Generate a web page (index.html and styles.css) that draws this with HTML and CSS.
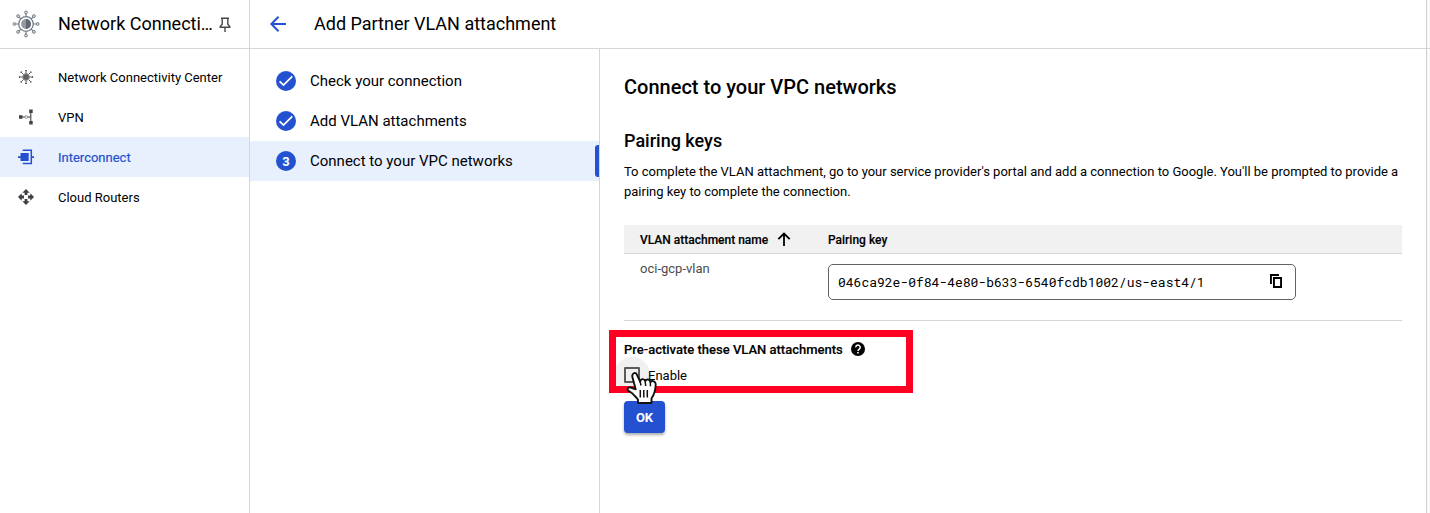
FILE: index.html
```html
<!DOCTYPE html>
<html lang="en">
<head>
<meta charset="utf-8">
<title>Add Partner VLAN attachment</title>
<link rel="stylesheet" href="styles.css">
</head>
<body>
<div class="app">
  <nav class="sidebar">
    <div class="product">
      <svg class="product-icon" width="28" height="28" viewBox="0 0 28 28" fill="none" stroke="#747b86">
        <circle cx="14" cy="14" r="7.3" stroke-width="1.3"/>
        <circle cx="14" cy="14" r="4.9" fill="#9299a4" stroke="none"/>
        <path d="M14 9.1a4.9 4.9 0 0 1 0 9.8z" fill="#606872" stroke="none"/>
        <path d="M14 6.7V4M14 21.3V24M6.7 14H4M21.3 14H24M8.8 8.8 7 7M19.2 8.8 21 7M8.8 19.2 7 21M19.2 19.2 21 21" stroke-width="1.2"/>
        <g stroke-width="1" fill="#e1e4e8"><circle cx="14" cy="2.4" r="1.4"/><circle cx="14" cy="25.6" r="1.4"/><circle cx="2.4" cy="14" r="1.4"/><circle cx="25.6" cy="14" r="1.4"/><circle cx="6.1" cy="6.1" r="1.4"/><circle cx="21.9" cy="6.1" r="1.4"/><circle cx="6.1" cy="21.9" r="1.4"/><circle cx="21.9" cy="21.9" r="1.4"/></g>
      </svg>
      <span class="product-name">Network Connecti…</span>
      <svg class="pin" width="12" height="16" viewBox="0 0 12 16" fill="none" stroke="#45474b" stroke-width="1.4"><path d="M2 1.2h8M3.2 1.2V7.3L1.2 9.5v.8h9.6v-.8L8.8 7.3V1.2M6 10.3V15"/></svg>
    </div>
    <div class="nav-list">
      <a class="nav-item"><svg width="16" height="16" viewBox="0 0 16 16" fill="none" stroke="#626262"><circle cx="8" cy="8" r="3.4" fill="#606060" stroke="#999"/><path d="M8 4.4V1M8 11.6V15M4.4 8H1M11.6 8H15M5.4 5.4 3.1 3.1M10.6 5.4l2.3-2.3M5.4 10.6l-2.3 2.3M10.6 10.6l2.3 2.3"/><path d="M7 1.5h2M7 14.5h2M1.5 7v2M14.5 7v2M2.5 3.7l1.2-1.2M12.3 2.5l1.2 1.2M2.5 12.3l1.2 1.2M12.3 13.5l1.2-1.2" stroke-width="1.2"/></svg><span>Network Connectivity Center</span></a>
      <a class="nav-item"><svg width="16" height="16" viewBox="0 0 16 16" fill="#424242"><path d="M1 6.2h3.6v3.6H1zM11.2.5h3.5V4h-3.5zM11.2 12h3.5v3.5h-3.5z"/><path d="M4.5 8h2.4M9.6 8h3.2M12.8 3.5v9" fill="none" stroke="#424242" stroke-width="1.1"/><circle cx="8.2" cy="8" r="1.4" fill="#fff" stroke="#777" stroke-width=".8"/></svg><span>VPN</span></a>
      <a class="nav-item active"><svg width="16" height="16" viewBox="0 0 16 16" fill="#2451cf"><path d="M2.5 4h8.2v8H2.5zM0 7.2h3v1.7H0zM13 7.2h3v1.7h-3z"/><path d="M4.7 1.2h8.6v13.4H4.7" fill="none" stroke="#2451cf" stroke-width="1.5"/></svg><span>Interconnect</span></a>
      <a class="nav-item"><svg width="16" height="16" viewBox="0 0 16 16" fill="#3e4044"><path d="M8 0l3.7 3.7H9.4V6H6.6V3.7H4.3zM8 16l3.7-3.7H9.4V10H6.6v2.3H4.3zM0 8l3.7-3.7v2.3H6v2.8H3.7v2.3zM16 8l-3.7-3.7v2.3H10v2.8h2.3v2.3z"/></svg><span>Cloud Routers</span></a>
    </div>
  </nav>
  <div class="workspace">
    <header class="topbar">
      <svg width="16" height="16" viewBox="0 0 16 16" fill="none" stroke="#2451cf" stroke-width="2"><path d="M16 8H1.5M8.5.8 1.4 8l7.1 7.2"/></svg>
      <h1>Add Partner VLAN attachment</h1>
    </header>
    <div class="columns">
      <aside class="steps">
        <div class="step"><span class="bullet"><svg width="20" height="20" viewBox="0 0 20 20" fill="none" stroke="#fff" stroke-width="1.8"><path d="m3.6 10.3 3.9 3.8 8.8-8.7"/></svg></span><span class="step-label">Check your connection</span></div>
        <div class="step"><span class="bullet"><svg width="20" height="20" viewBox="0 0 20 20" fill="none" stroke="#fff" stroke-width="1.8"><path d="m3.6 10.3 3.9 3.8 8.8-8.7"/></svg></span><span class="step-label">Add VLAN attachments</span></div>
        <div class="step current"><span class="bullet number">3</span><span class="step-label">Connect to your VPC networks</span><span class="marker"></span></div>
      </aside>
      <main class="content">
        <h2>Connect to your VPC networks</h2>
        <h3>Pairing keys</h3>
        <p class="intro">To complete the VLAN attachment, go to your service provider's portal and add a connection to Google. You'll be prompted to provide a<br>pairing key to complete the connection.</p>
        <div class="table">
          <div class="row head">
            <div class="name-cell"><span class="head-label">VLAN attachment name</span><svg width="14" height="14" viewBox="0 0 14 14" fill="none" stroke="#000" stroke-width="1.8"><path d="M7 14V1.7M1.3 7.2 7 1.5l5.7 5.7"/></svg></div>
            <div class="head-label">Pairing key</div>
          </div>
          <div class="row body">
            <div class="name-cell vlan">oci-gcp-vlan</div>
            <div class="key-field"><span>046ca92e-0f84-4e80-b633-6540fcdb1002/us-east4/1</span><svg width="12" height="14" viewBox="0 0 12 14" fill="none" stroke="#000" stroke-width="1.9"><path d="M.95 10V.95H9"/><path d="M3.95 3.95h7.1v9.1h-7.1z"/></svg></div>
          </div>
        </div>
        <section class="activate">
          <div class="activate-title"><span>Pre-activate these VLAN attachments</span><svg width="14" height="14" viewBox="0 0 14 14"><circle cx="7" cy="7" r="7"/><path d="M4.8 5.4a2.2 2.2 0 1 1 3.5 1.7C7.4 7.8 7 8 7 8.9" fill="none" stroke="#fff" stroke-width="1.5"/><path d="M6.2 10h1.6v1.5H6.2z" fill="#fff"/></svg></div>
          <label class="enable"><span class="checkbox"></span><span class="enable-label">Enable</span></label>
          <button class="ok">OK</button>
          <div class="highlight"></div>
          <svg class="cursor" width="32" height="34" viewBox="0 0 32 34"><path d="M12 32v-3.2C10.500 26 8 24.500 6.500 22.500L2.200 19.600C.6 17.800 2.300 15.800 4.800 16.600L9.700 18.300 6.500 6.500C5.400 2.200 9.400.4 11 3.800L14.100 10.500C15 7.300 18.300 7.400 19.200 10.100 20.500 7.500 23.800 8.200 24.400 11 26.500 9 29.800 10.300 29.700 13.500 29.600 19 28.500 23 25.500 27.500V32z" fill="#fff" stroke="#111" stroke-width="1.9" stroke-linejoin="round"/><path d="M14.100 10.500 15 14.500M19.200 10.500l.5 4.500M24.400 11.300v4M14.300 19v7.500M17.800 19v7.500M21.300 19v7.500" fill="none" stroke="#111" stroke-width="1.5"/></svg>
        </section>
      </main>
    </div>
  </div>
  <div class="edge"><div class="edge-top"></div></div>
</div>
</body>
</html>
```
FILE: styles.css
```css
* { box-sizing: border-box; }
body { margin: 0; background: #fff; color: #000; font: 13px/20px Roboto, "Liberation Sans", sans-serif; overflow: hidden; }
svg { display: block; flex: none; }
h1, h2, h3, p { margin: 0; }
.app { display: flex; width: 1430px; height: 513px; }
.sidebar { width: 250px; flex: none; border-right: 1px solid #d6d6d6; }
.product { height: 49px; display: flex; align-items: center; padding-left: 12px; border-bottom: 1px solid #d6d6d6; }
.product-name { width: 155px; margin-left: 18px; font-size: 18px; line-height: 24px; white-space: nowrap; }
.pin { margin: 1px 0 0 6px; }
.nav-list { padding-top: 8px; }
.nav-item { height: 40px; display: flex; align-items: center; gap: 24px; padding-left: 18px; }
.nav-item span { padding-top: 2px; }
.nav-item.active { background: #e9f0fd; color: #2451cf; -webkit-text-stroke: .2px #2451cf; }
.workspace { flex: 1; min-width: 0; display: flex; flex-direction: column; }
.topbar { height: 49px; flex: none; display: flex; align-items: center; gap: 28px; padding-left: 20px; border-bottom: 1px solid #d6d6d6; }
.topbar h1 { font-size: 18px; font-weight: 400; line-height: 24px; }
.columns { display: flex; flex: 1; }
.steps { width: 350px; flex: none; padding-top: 12px; border-right: 1px solid #d6d6d6; }
.step { display: flex; align-items: center; height: 40px; padding-left: 26px; }
.step.current { background: #e9f0fd; }
.bullet { width: 20px; height: 20px; border-radius: 50%; background: #2451cf; color: #fff; font-size: 13px; font-weight: 700; text-align: center; }
.number { line-height: 22px; }
.step-label { flex: 1; margin-left: 14px; font-size: 15px; }
.marker { width: 4px; height: 32px; border-radius: 3px 0 0 3px; background: #2451cf; }
.content { flex: 1; min-width: 0; padding: 26px 24px 0; }
h2 { font-size: 20px; font-weight: 500; line-height: 24px; }
h3 { margin-top: 30px; font-size: 18px; font-weight: 500; line-height: 24px; }
.intro { margin-top: 9px; white-space: nowrap; letter-spacing: -.005px; }
.table { margin-top: 23px; border-bottom: 1px solid #d6d6d6; }
.row { display: flex; padding-left: 16px; }
.head { height: 29px; background: #f1f1f1; border-bottom: 1px solid #d6d6d6; align-items: center; font-size: 12px; font-weight: 500; }
.head-label { padding-top: 2px; -webkit-text-stroke: .15px #000; }
.name-cell { width: 188px; flex: none; display: flex; align-items: center; gap: 9px; }
.body { height: 66px; align-items: flex-start; }
.vlan { margin-top: 5px; color: #4b4b4b; }
.key-field { width: 468px; height: 36px; margin-top: 10px; display: flex; align-items: center; justify-content: space-between; padding: 0 13px 0 9px; border: 1px solid #5f6368; border-radius: 5px; font-family: "Roboto Mono", "DejaVu Sans Mono", monospace; font-size: 13px; }
.key-field svg { margin-bottom: 2px; }
.activate { position: relative; padding-top: 18px; }
.activate-title { display: flex; align-items: center; gap: 8px; font-weight: 500; }
.activate-title span { padding-top: 1px; margin-bottom: -1px; -webkit-text-stroke: .15px #000; }
.enable { display: flex; align-items: center; gap: 8px; height: 20px; margin-top: 6px; }
.enable-label { padding-top: 2px; }
.checkbox { width: 16px; height: 16px; border: 2px solid #5b5b5b; border-radius: 1px; position: relative; }
.checkbox::before { content: ""; position: absolute; z-index: -1; left: -12px; top: -12px; width: 36px; height: 36px; border-radius: 50%; background: #f0f0f0; }
.ok { display: block; width: 41px; height: 32px; margin-top: 16px; padding: 1px 0 0; border: 0; border-radius: 4px; background: #2451cf; color: #fff; font: 700 13px/31px Roboto, sans-serif; box-shadow: 0 2px 3px #0005; }
.highlight { position: absolute; left: -15px; top: 9px; width: 304px; height: 63px; border: 7px solid #ff0022; }
.cursor { position: absolute; left: 2px; top: 50px; }
.edge { width: 4px; flex: none; border-left: 1px solid #d0d0d0; background: #fafafa; }
.edge-top { height: 49px; border-bottom: 1px solid #d6d6d6; }
```
